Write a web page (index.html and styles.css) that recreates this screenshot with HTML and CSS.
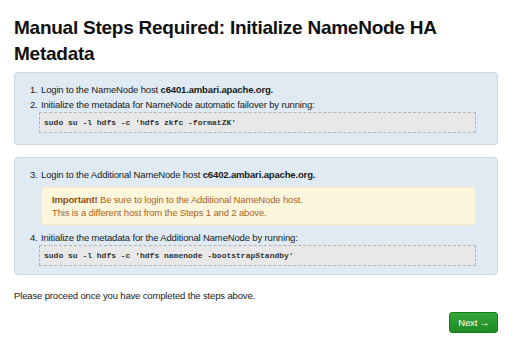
FILE: index.html
```html
<!DOCTYPE html>
<html lang="en">

<head>
  <meta charset="UTF-8">
  <link rel="stylesheet" href="styles.css">
  <title>Manual Steps Required</title>
</head>

<body>

  <div id="wizard-step">
    <h2 class="step-title">Manual Steps Required: Initialize NameNode HA Metadata</h2>

    <div class="steps-box">
      <ol class="steps">
        <li>Login to the NameNode host <b>c6401.ambari.apache.org.</b></li>
        <li>Initialize the metadata for NameNode automatic failover by running:
          <div class="code-block">sudo su -l hdfs -c 'hdfs zkfc -formatZK'</div>
        </li>
      </ol>
    </div>

    <div class="steps-box">
      <ol class="steps" start="3">
        <li>Login to the Additional NameNode host <b>c6402.ambari.apache.org.</b>
          <div class="alert">
            <b>Important!</b> Be sure to login to the Additional NameNode host.<br>
            This is a different host from the Steps 1 and 2 above.
          </div>
        </li>
        <li>Initialize the metadata for the Additional NameNode by running:
          <div class="code-block">sudo su -l hdfs -c 'hdfs namenode -bootstrapStandby'</div>
        </li>
      </ol>
    </div>

    <p class="proceed">Please proceed once you have completed the steps above.</p>

    <div class="btn-area">
      <button class="btn-success">Next &rarr;</button>
    </div>
  </div>

</body>

</html>
```

FILE: styles.css
```css
body {
  margin: 0;
  background-color: #fff;
  font-family: 'Liberation Sans', Arial, sans-serif;
  font-size: 9.5px;
  letter-spacing: -0.15px;
  color: #1a1a1a;
}

#wizard-step {
  width: 484px;
  padding: 15px 0 0 14px;
}

.step-title {
  margin: 0 0 5px 0;
  font-size: 19px;
  line-height: 26px;
  letter-spacing: -0.25px;
  font-weight: bold;
  color: #111;
}

.steps-box {
  background-color: #dfeaf3;
  border: 1px solid #c9d7e2;
  border-radius: 4px;
  padding: 9px 0 11px 0;
  margin-bottom: 12px;
}

.steps-box + .steps-box {
  padding-bottom: 8px;
}

.steps {
  margin: 0;
  padding: 0 21px 0 25px;
  list-style-position: outside;
}

.steps li {
  line-height: 15px;
  padding-left: 1px;
}

.code-block {
  margin: 0 0 0 -2px;
  padding: 4px 4px;
  background-color: #e8e8e8;
  border: 1px dashed #b4b4b4;
  font-family: 'Liberation Mono', 'Courier New', monospace;
  font-size: 8px;
  font-weight: bold;
  letter-spacing: 0;
  line-height: 11px;
  color: #333;
}

.alert {
  margin: 5px 0 5px 0;
  padding: 5px 10px;
  background-color: #fcf6dd;
  border: 1px solid #f9e9c4;
  border-radius: 4px;
  color: #a8651f;
  line-height: 13px;
}

.alert b {
  color: #8f4c12;
}

.proceed {
  margin: 13px 0 0 0;
  line-height: 15px;
}

.btn-area {
  display: flex;
  justify-content: flex-end;
  margin-top: 9px;
}

.btn-success {
  background: linear-gradient(#36a93b, #1e8924);
  border: 1px solid #187a1d;
  border-radius: 3px;
  color: #fff;
  font-family: 'Liberation Sans', Arial, sans-serif;
  font-size: 9.5px;
  letter-spacing: -0.15px;
  padding: 4px 8px;
  line-height: 11px;
  height: 21px;
  cursor: pointer;
}
```
